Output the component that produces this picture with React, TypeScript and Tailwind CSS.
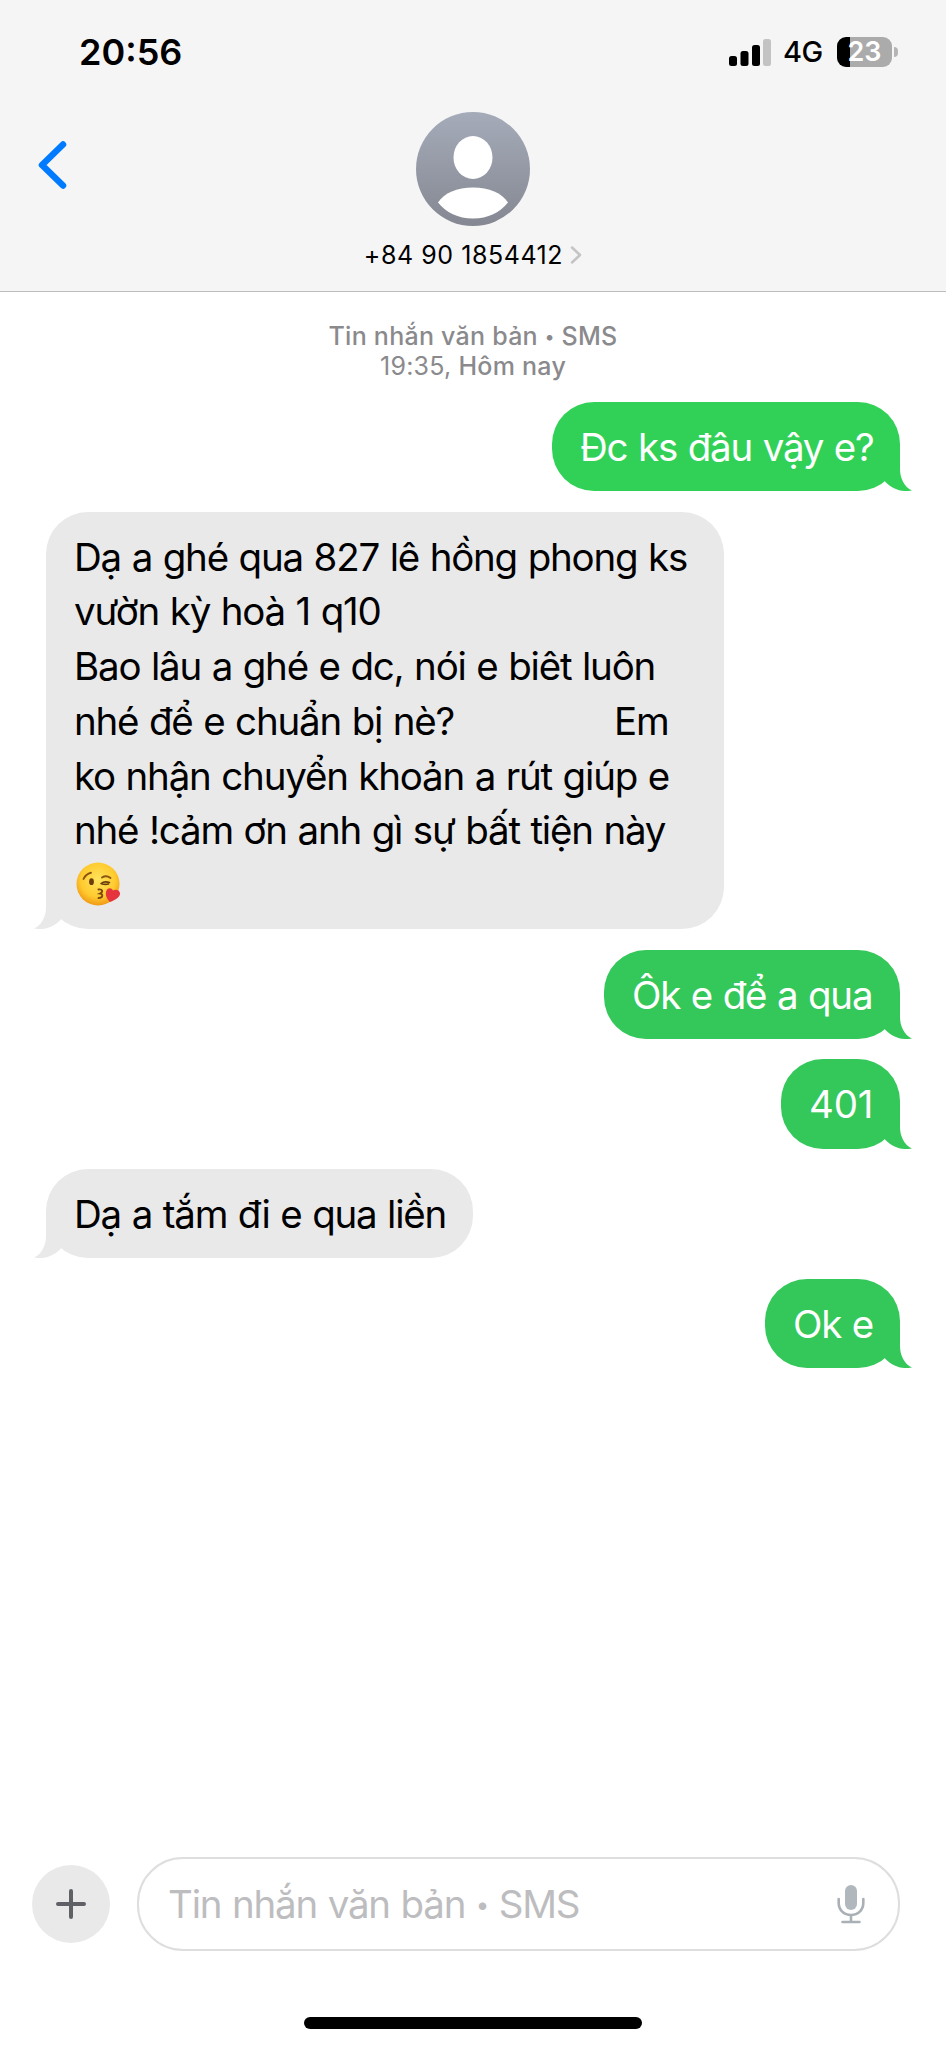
import React from "react";
import { clsx } from "clsx";

type Message = {
    id: number;
    mine: boolean;
    lines: React.ReactNode[];
    className: string;
};

const KissEmoji = () => (
    <svg viewBox="0 0 46 44" className="relative top-[4.5px] left-[2px] h-[44px] w-[46px]" role="img" aria-label="😘">
        <defs>
            <radialGradient id="face" cx="0.5" cy="0.4" r="0.62">
                <stop offset="0" stopColor="#ffe35c" />
                <stop offset="0.65" stopColor="#ffcb2f" />
                <stop offset="1" stopColor="#ee9412" />
            </radialGradient>
        </defs>
        <circle cx="22" cy="22" r="21.5" fill="url(#face)" />
        <path d="M7.500 17c1.500-3.500 4-5.500 7.500-6.300" fill="none" stroke="#8a5310" strokeWidth="1.900" strokeLinecap="round" />
        <path d="M26 15.500c3-1.800 6-1.300 8.500 0.500" fill="none" stroke="#8a5310" strokeWidth="1.900" strokeLinecap="round" />
        <ellipse cx="15.500" cy="19.700" rx="2.400" ry="3.400" fill="#6b3d0c" />
        <path d="M25 21.500c2.500-2 5.500-2 8.500-1M26 22c2.500 0.500 4.500 0.500 6.500 0" fill="none" stroke="#6b3d0c" strokeWidth="1.600" strokeLinecap="round" />
        <path d="M22.500 27.500c4-0.800 5 2.300 1.500 4c3.500 0.500 3 4.500-1.500 4.500" fill="none" stroke="#7d480d" strokeWidth="1.900" strokeLinecap="round" />
        <path d="M34 40c-4-4-5-8-3.500-11.500c1.500-3 5-3 6.500 0c2.500-1.700 6.500-0.500 7 2.500c0.500 4-4.500 7-10 9Z" fill="#e5343d" />
    </svg>
);

const messages: Message[] = [
    { id: 1, mine: true, lines: ["Đc ks đâu vậy e?"], className: "mt-[103px] w-[348px] bg-[#31d158] text-[#31d158]" },
    {
        id: 2,
        mine: false,
        lines: [
            "Dạ a ghé qua 827 lê hồng phong ks",
            "vườn kỳ hoà 1 q10",
            "Bao lâu a ghé e dc, nói e biêt luôn",
            <>
                nhé để e chuẩn bị nè?<span className="inline-block w-[160px]" />Em
            </>,
            "ko nhận chuyển khoản a rút giúp e",
            "nhé !cảm ơn anh gì sự bất tiện này",
            <KissEmoji />,
        ],
        className: "w-[678px]",
    },
    { id: 3, mine: true, lines: ["Ôk e để a qua"], className: "w-[296px]" },
    { id: 4, mine: true, lines: [<span className="tracking-[-0.2px]">401</span>], className: "w-[119px]" },
    { id: 5, mine: false, lines: ["Dạ a tắm đi e qua liền"], className: "w-[427px]" },
    { id: 6, mine: true, lines: ["Ok e"], className: "w-[135px]" },
];

const Tail = ({ mine }: { mine: boolean }) => (
    <svg
        viewBox="0 0 41 44"
        className={clsx("absolute bottom-0 h-[44px] w-[41px]", mine ? "-right-3" : "-left-3 -scale-x-100")}
        fill="currentColor"
    >
        <path d="M29 0V22C29 31 33 40 41 43.500C31 45.500 21 42 14.500 35L4 22V0Z" />
    </svg>
);

const Bubble = ({ message }: { message: Message }) => {
    const { mine, lines, id } = message;
    return (
        <div
            className={clsx(
                "relative rounded-[42px] pt-[18px] pb-[16.5px] pl-[28px]",
                mine ? "self-end" : "self-start",
                mine && id !== 1 && "bg-[#34c759] text-[#34c759]",
                !mine && "bg-[#e9e9e9] text-[#e9e9e9]",
                message.className
            )}
        >
            <Tail mine={mine} />
            <div
                className={clsx(
                    "relative text-[38.5px] leading-[54.7px] tracking-[-1.2px] [word-spacing:1px] whitespace-nowrap",
                    mine ? "text-white" : "text-black"
                )}
            >
                {lines.map((line, i) => (
                    <div key={i} className="h-[54.7px]">
                        {line}
                    </div>
                ))}
            </div>
        </div>
    );
};

const StatusBar = () => (
    <div className="flex h-[104px] items-start justify-between pr-[48px] pl-[79px]">
        <span className="mt-[30px] text-[36px] leading-[44px] font-semibold">20:56</span>
        <div className="mt-[37px] flex h-[30px] items-center">
            <svg viewBox="0 0 42 28" className="h-[28px] w-[42px]">
                <rect x="0" y="18" width="8" height="10" rx="2.500" />
                <rect x="11.500" y="13" width="8" height="15" rx="2.500" />
                <rect x="23" y="7" width="8" height="21" rx="2.500" />
                <rect x="34" y="1" width="8" height="27" rx="2.500" fill="#c3c3c3" />
            </svg>
            <span className="ml-[12px] w-[41px] text-[29px] leading-[32px] font-medium tracking-[-0.5px]">4G</span>
            <div className="ml-[13px] flex h-[30px] w-[55px] items-center justify-center rounded-[9px] bg-[linear-gradient(90deg,#000_13px,#ababab_13px)] text-[27px] leading-[30px] font-semibold text-white">
                23
            </div>
            <span className="ml-[2px] h-[10px] w-[4px] rounded-r-full bg-[#b5b5b5]" />
        </div>
    </div>
);

const Header = () => (
    <header className="h-[292px] border-b border-[#bdbdbf] bg-[#f5f5f5]">
        <StatusBar />
        <div className="grid grid-cols-[1fr_260px_1fr]">
            <button className="mt-[36px] ml-[37px] h-[50px] w-[30px]">
                <svg viewBox="0 0 30 50" className="h-[50px] w-[30px]" fill="none" stroke="#007aff" strokeWidth="6.500" strokeLinecap="round" strokeLinejoin="round">
                    <path d="M26 4.500L5 25L26 45.500" />
                </svg>
            </button>
            <div className="flex flex-col items-center pt-[8px]">
                <svg viewBox="0 0 114 114" className="h-[114px] w-[114px]">
                    <defs>
                        <linearGradient id="avatar" x1="0" y1="0" x2="0" y2="1">
                            <stop offset="0" stopColor="#a5abb9" />
                            <stop offset="1" stopColor="#858892" />
                        </linearGradient>
                    </defs>
                    <circle cx="57" cy="57" r="57" fill="url(#avatar)" />
                    <ellipse cx="57" cy="45.500" rx="19.500" ry="21.500" fill="#fff" />
                    <path d="M22 90.500C28 81 41 75.500 57 75.500S86 81 92 90.500C84 100.500 72 106.500 57 106.500S30 100.500 22 90.500Z" fill="#fff" />
                </svg>
                <div className="mt-[13px] flex items-center gap-[7px]">
                    <span className="text-[25px] leading-[32px] tracking-[0.55px] whitespace-nowrap">+84 90 1854412</span>
                    <svg viewBox="0 0 12 18" className="h-[18px] w-[12px]" fill="none" stroke="#c4c4c6" strokeWidth="2.500" strokeLinecap="round" strokeLinejoin="round">
                        <path d="M2 1.500L10 9L2 16.500" />
                    </svg>
                </div>
            </div>
        </div>
    </header>
);

const Composer = () => (
    <div className="flex items-center pr-[46px] pl-[32px]">
        <button className="flex h-[78px] w-[78px] items-center justify-center rounded-full bg-[#e9e9e9]">
            <svg viewBox="0 0 30 30" className="h-[30px] w-[30px]" stroke="#606067" strokeWidth="4" strokeLinecap="round">
                <path d="M15 2V28M2 15H28" />
            </svg>
        </button>
        <div className="ml-[27px] flex h-[94px] flex-1 items-center justify-between rounded-[46px] border-2 border-[#dedede] pr-[33px] pl-[29px]">
            <span className="text-[38.5px] leading-[50px] tracking-[-1.2px] [word-spacing:1px] whitespace-nowrap text-[#bdbdbf]">
                Tin nhắn văn bản <span className="align-[5px] text-[24px] leading-none">•</span> SMS
            </span>
            <svg viewBox="0 0 28 40" className="h-[40px] w-[28px]" fill="none" stroke="#a9b0b6" strokeWidth="2.600" strokeLinecap="round">
                <rect x="8" y="1" width="12" height="25" rx="6" fill="#b1b8bd" stroke="none" />
                <path d="M1.700 15V19C1.700 26 7 31 14 31S26.300 26 26.300 19V15M14 31V37M5.500 38H22.500" />
            </svg>
        </div>
    </div>
);

export default function App() {
    return (
        <div className="flex h-[2047px] w-[946px] flex-col bg-white font-['Inter','Liberation_Sans',sans-serif] text-black">
            <Header />
            <div className="mt-[29px] -mb-[82px] text-center text-[25px] leading-[30px] font-medium tracking-[0.25px] text-[#8a8a8d]">
                <div>
                    Tin nhắn văn bản <span className="align-[2px] text-[18px] leading-none">•</span> SMS
                </div>
                <div>
                    <span className="font-normal">19:35,</span> Hôm nay
                </div>
            </div>
            <main className="flex flex-1 flex-col gap-[20.600px] pr-[46px] pl-[46px]">
                {messages.map((message) => (
                    <Bubble key={message.id} message={message} />
                ))}
            </main>
            <Composer />
            <div className="mt-[66px] mb-[18px] h-[12px] w-[338px] self-center rounded-full bg-black" />
        </div>
    );
}
